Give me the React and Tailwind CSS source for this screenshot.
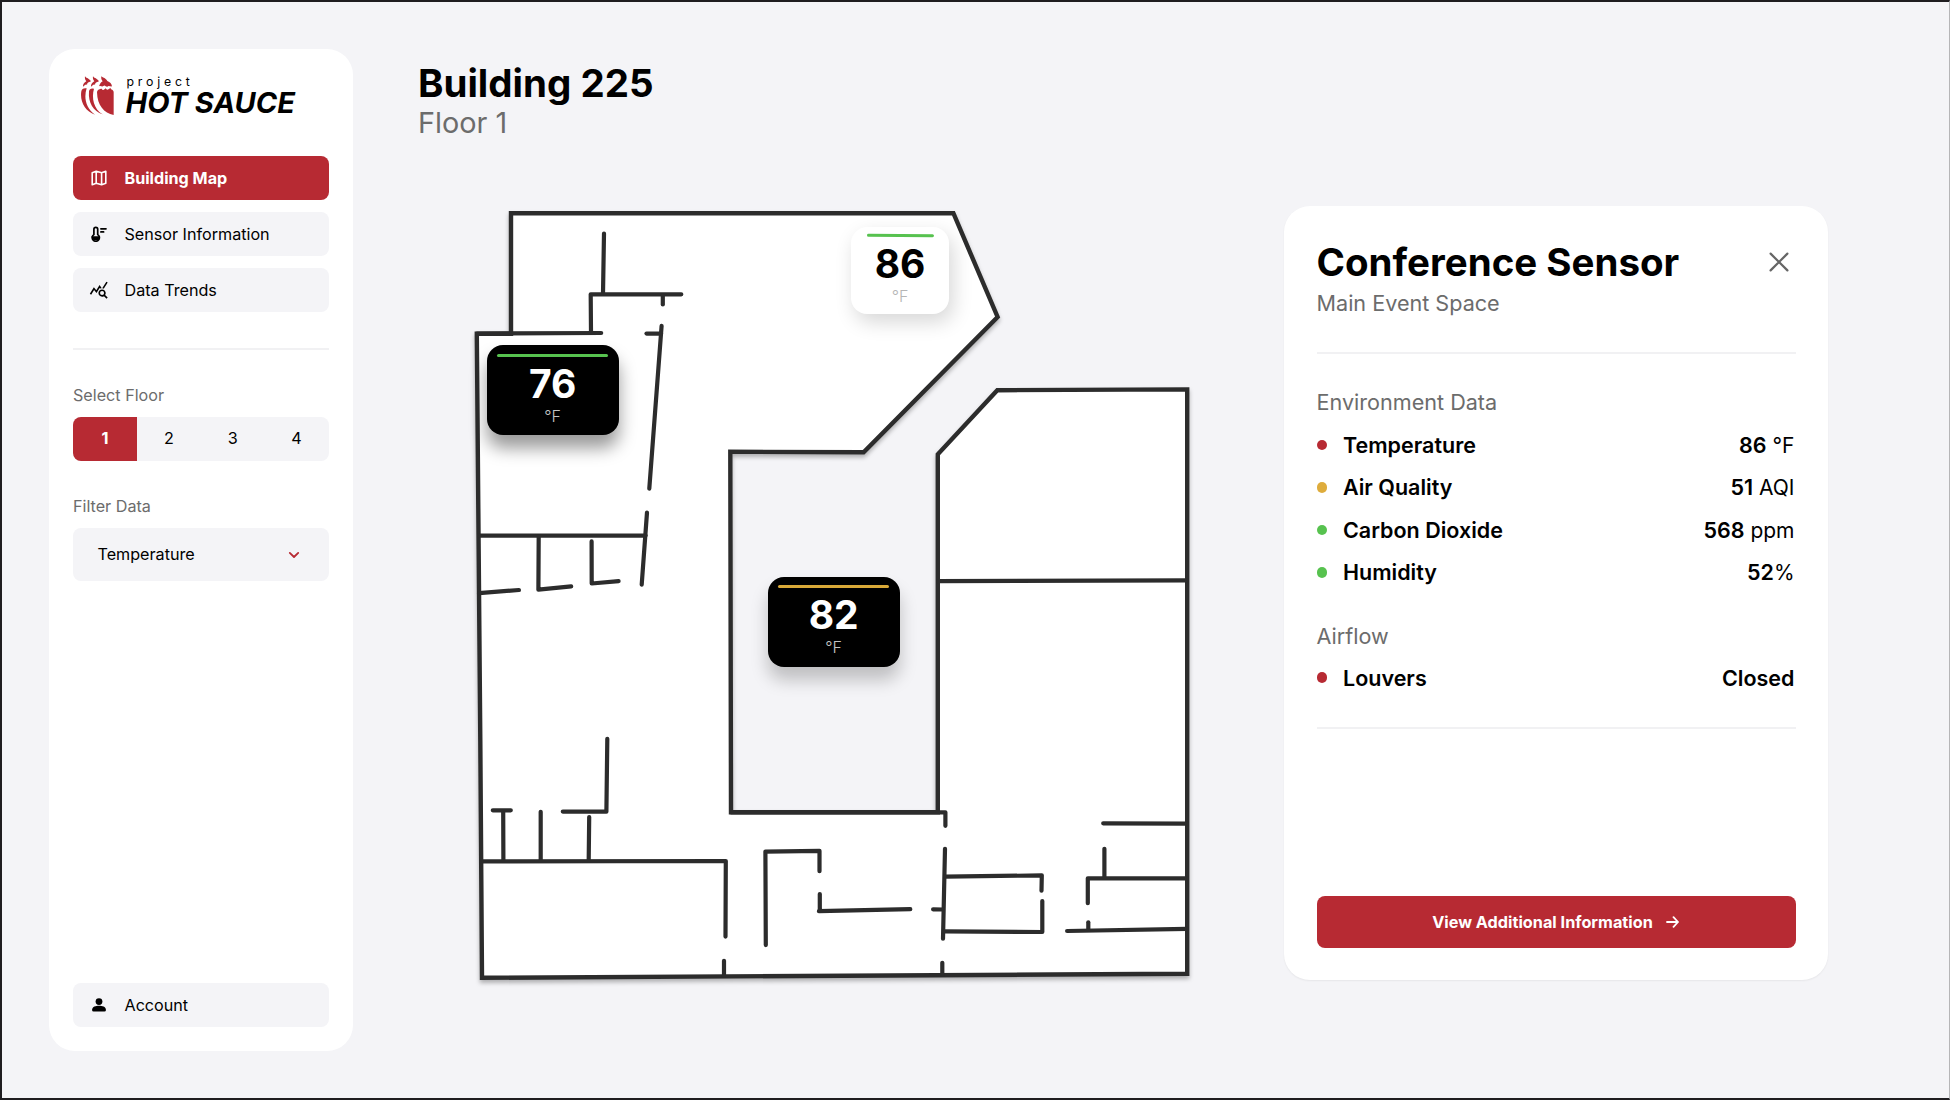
import { MdQueryStats } from "react-icons/md";

const walls = [
  "M604 233.5L603 294",
  "M681.3 294.3H590.7L591 333",
  "M477 333.6L601.2 333",
  "M662.8 295V304.5",
  "M646.5 333.6H661",
  "M661.6 325.8L649.3 488.6",
  "M647 512.5L641.7 584.6",
  "M480 535.6H645.6",
  "M538.7 536L538.4 589.7L571.2 586.4",
  "M591.6 541.4L591.7 583.5L618.6 581.2",
  "M479 593.2L518.9 590",
  "M607.3 738.9L606.4 811.6H562.8",
  "M492.8 810.3H510.8M503.2 811L503.4 860",
  "M540.7 811.8V860",
  "M589.2 817L588.7 860",
  "M481 861.4L725.8 861L725.5 936.6",
  "M724 960.8V976",
  "M765.8 945.1L765.4 851.6L819.5 850.8V871.2",
  "M819.8 894.1V910.8M818.9 911.2L910.3 909.2",
  "M731 812.3H945.4V825.8",
  "M945 848.8L943 938.7",
  "M933.1 909.3L943 909.5",
  "M945 876.7L1041.8 875.4L1041.5 890.7",
  "M1042.3 901.1V932L944 931.4",
  "M942.3 962.8V974",
  "M1103.2 823.3L1187 823.7",
  "M1104.4 848.8V877",
  "M1187 878.3H1087.8V903.2",
  "M1088.3 922.3V930",
  "M1067.1 931L1187 928.8",
  "M938 581.2L1187 580.3",
];

const outline =
  "M511 213.2H953.4L997.6 317L863.6 452.2L730.3 451.8L731 812.3H937.8V454.3L997.3 390.2L1187.2 389.4V973.8L482 977.8L480.3 740L476.8 333.8H511Z";

function FloorPlan() {
  return (
    <svg className="block h-[800px] w-[740px]" viewBox="460 200 740 800" fill="none">
      <g stroke="#2c2c2c" strokeWidth="4.4" strokeLinejoin="round">
        <path className="drop-shadow-[0_3px_2px_rgba(0,0,0,0.28)]" d={outline} fill="#fff" strokeLinejoin="miter" />
        <g strokeWidth="4.2" strokeLinecap="round">
          {walls.map((d) => (
            <path key={d} d={d} />
          ))}
        </g>
      </g>
    </svg>
  );
}

function Logo() {
  return (
    <svg className="h-[41px] w-[35px]" viewBox="240 228 105 123" fill="#b72a33">
      <path d="M291 279C294 270 299 270 305 269C309 277 314 270 317 268C321 276 327 270 331 266C333 274 341 270 341 280V348C312 341 292 321 291 279Z" />
      <path d="M267 277Q269 266 282 269C274 296 281 330 308 346C280 337 264 312 267 277Z" />
      <path d="M244 277Q246 266 260 268C251 296 257 327 285 347C255 337 239 307 244 277Z" />
      <path d="M255 231C257 238 265 235 273 247C265 250 262 251 261 257C256 255 254 259 249 263C248 256 253 250 259 247C255 242 254 238 255 231Z" />
      <path d="M279 231C281 238 289 235 297 247C289 250 286 251 285 257C280 255 278 259 273 263C272 256 277 250 283 247C279 242 278 238 279 231Z" />
      <path d="M304 231C307 237 316 235 322 246C330 249 335 254 336 262C330 263 326 258 322 263C317 264 315 256 310 261C306 265 303 259 297 262C300 254 303 249 308 247C304 242 303 238 304 231Z" />
    </svg>
  );
}

function MapIcon() {
  return (
    <svg className="size-4" viewBox="0 0 16 16" fill="none" stroke="currentColor" strokeWidth="1.6" strokeLinejoin="round">
      <path d="M1.2 2.8L5.2 1.3L10.6 2.8L14.8 1.3V13.2L10.6 14.7L5.2 13.2L1.2 14.7ZM5.2 1.3V13.2M10.6 2.8V14.7" />
    </svg>
  );
}

function ThermometerIcon() {
  return (
    <svg className="size-4" viewBox="0 0 16 16" fill="none" stroke="currentColor" strokeWidth="1.7" strokeLinecap="round">
      <path d="M2.9 8.6V3.2A1.9 1.9 0 0 1 6.7 3.2V8.6A3.6 3.6 0 1 1 2.9 8.6Z" strokeLinejoin="round" />
      <path d="M1.5 11H8.1A3.4 3.4 0 0 1 1.5 11Z" fill="currentColor" />
      <path d="M9.9 2.8H15M9.9 5.9H12.6" />
    </svg>
  );
}

function PersonIcon() {
  return (
    <svg className="size-4" viewBox="0 0 16 16" fill="currentColor">
      <circle cx="8" cy="4.6" r="3.4" />
      <path d="M1.2 12.2C1.2 9.8 4.8 8.7 8 8.7S14.8 9.8 14.8 12.2V13.2Q14.8 14.5 13.5 14.5H2.5Q1.2 14.5 1.2 13.2Z" />
    </svg>
  );
}

function NavItem({ icon, label, active }) {
  return (
    <button
      className={
        active
          ? "flex h-11 w-full items-center rounded-lg bg-[#b72a33] pl-[18px] text-left text-[16.15px] font-bold text-white"
          : "flex h-11 w-full items-center rounded-lg bg-[#f4f4f7] pl-[18px] text-left text-[16.15px] text-black"
      }
    >
      <span className="flex w-[33.5px] items-center">{icon}</span>
      {label}
    </button>
  );
}

function DarkPin({ value, bar, className }) {
  return (
    <div className={`absolute flex h-[90px] w-[132px] flex-col items-center rounded-2xl bg-black pt-[8.5px] ${className}`}>
      <div className={`h-[3px] w-[111px] rounded-full ${bar}`} />
      <div className="mt-[5px] text-[39px] leading-[44px] font-bold text-white">{value}</div>
      <div className="text-base leading-[20px] font-light text-[#c4c4c4]">°F</div>
    </div>
  );
}

function Row({ color, label, value, unit }) {
  return (
    <div className="flex h-[42.6px] items-center text-[21.5px] text-black">
      <span className={`mr-[16px] size-[10.5px] rounded-full ${color}`} />
      <span className="font-semibold">{label}</span>
      <span className="ml-auto">
        <span className="font-semibold">{value}</span>
        {unit && <span className="text-[21px] font-normal">{unit}</span>}
      </span>
    </div>
  );
}

export default function App() {
  return (
    <div className="flex h-[1100px] w-[1950px] overflow-hidden border-t-2 border-r border-b-2 border-l-2 border-t-[#1f1d20] border-r-[#b5b5b7] border-b-[#1f1d20] border-l-[#1f1d20] bg-[#f4f4f7] font-['Inter',sans-serif]">
      <aside className="mt-[47px] ml-[46.5px] flex h-[1002px] w-[304.5px] shrink-0 flex-col rounded-[26px] bg-white px-[24.5px] pb-6">
        <div className="mt-[26px] flex h-[42px] pl-[7px]">
          <Logo />
          <div className="ml-[10.5px] whitespace-nowrap">
            <div className="h-[14px] pl-px text-[12.3px] leading-[13px] tracking-[3.8px] text-black">project</div>
            <div className="text-[29px] leading-[28px] font-bold text-black italic">HOT SAUCE</div>
          </div>
        </div>
        <nav className="mt-[39px] flex flex-col gap-3">
          <NavItem active icon={<MapIcon />} label="Building Map" />
          <NavItem icon={<ThermometerIcon />} label="Sensor Information" />
          <NavItem icon={<MdQueryStats className="-ml-[2px] size-[19.5px] shrink-0" />} label="Data Trends" />
        </nav>
        <div className="mt-[35.5px] h-0.5 w-full bg-[#f1f1f3]" />
        <div className="mt-[33px] text-[16.15px] leading-6 text-[#6c6c6c]">Select Floor</div>
        <div className="mt-[10px] grid h-11 grid-cols-4 overflow-hidden rounded-lg bg-[#f4f4f7] text-[16.15px] text-black">
          <button className="bg-[#b72a33] font-bold text-white">1</button>
          <button>2</button>
          <button>3</button>
          <button>4</button>
        </div>
        <div className="mt-[33.5px] text-[16.15px] leading-6 text-[#6c6c6c]">Filter Data</div>
        <button className="mt-[10px] flex h-[53px] items-center justify-between rounded-lg bg-[#f4f4f7] pr-[29px] pl-[24.5px] text-[16.15px] text-black">
          Temperature
          <svg className="h-[8px] w-[12px]" viewBox="0 0 12 8" fill="none" stroke="#b72a33" strokeWidth="1.8" strokeLinecap="round" strokeLinejoin="round">
            <path d="M1.8 1.9L6 6L10.2 1.9" />
          </svg>
        </button>
        <div className="mt-auto">
          <NavItem icon={<PersonIcon />} label="Account" />
        </div>
      </aside>

      <main className="ml-[65px] w-[782px] shrink-0 pt-[59px]">
        <h1 className="text-[38.5px] leading-[44px] font-bold text-black">Building 225</h1>
        <p className="text-[28.8px] leading-[36px] font-normal text-[#6c6c6c]">Floor 1</p>
        <div className="relative mt-[59px] ml-[42px] w-[740px]">
          <FloorPlan />
          <div className="absolute top-[27px] left-[391px] flex h-[87px] w-[98px] flex-col items-center rounded-2xl bg-white pt-[7px] shadow-[4px_8px_20px_rgba(0,0,0,0.16)]">
            <div className="h-[3px] w-[67px] rotate-[0.6deg] rounded-full bg-[#57c24f]" />
            <div className="mt-[5px] text-[39px] leading-[44px] font-bold text-black">86</div>
            <div className="text-base leading-[20px] font-light text-[#b5b5b5]">°F</div>
          </div>
          <DarkPin value="76" bar="bg-[#57c24f]" className="top-[145px] left-[26.7px] shadow-[0_13px_17px_rgba(0,0,0,0.4)]" />
          <DarkPin value="82" bar="bg-[#d9a938]" className="top-[376.5px] left-[307.7px] shadow-[0_13px_17px_rgba(0,0,0,0.22)]" />
        </div>
      </main>

      <section className="mt-[204px] ml-[84px] flex h-[774px] w-[544px] shrink-0 flex-col rounded-[26px] bg-white pr-[32.5px] pb-8 pl-[32.5px] shadow-[0_1px_2px_rgba(0,0,0,0.06)]">
        <div className="mt-[34px] flex items-start justify-between">
          <h2 className="text-[38.5px] leading-[44px] font-bold whitespace-nowrap text-black">Conference Sensor</h2>
          <svg className="mt-[12px] mr-[6.5px] size-5" viewBox="0 0 20 20" fill="none" stroke="#666" strokeWidth="2.2" strokeLinecap="round">
            <path d="M1.6 1.6L18.4 18.4M18.4 1.6L1.6 18.4" />
          </svg>
        </div>
        <p className="mt-[5px] text-[21.6px] leading-[28px] text-[#6c6c6c]">Main Event Space</p>
        <div className="mt-[34.5px] h-0.5 shrink-0 bg-[#f1f1f3]" />
        <p className="mt-[34.5px] text-[21.6px] leading-[28px] text-[#6c6c6c]">Environment Data</p>
        <div className="mt-[7.5px] pr-px">
          <Row color="bg-[#b72a33]" label="Temperature" value="86" unit=" °F" />
          <Row color="bg-[#deac3c]" label="Air Quality" value="51" unit=" AQI" />
          <Row color="bg-[#57c24f]" label="Carbon Dioxide" value="568" unit=" ppm" />
          <Row color="bg-[#57c24f]" label="Humidity" value="52" unit="%" />
        </div>
        <p className="mt-[28px] text-[21.6px] leading-[28px] text-[#6c6c6c]">Airflow</p>
        <div className="mt-[6.5px] pr-px">
          <Row color="bg-[#b72a33]" label="Louvers" value="Closed" />
        </div>
        <div className="mt-[28px] h-0.5 shrink-0 bg-[#f1f1f3]" />
        <button className="mt-auto flex h-[52px] items-center justify-center rounded-lg bg-[#b72a33] text-[16.25px] font-bold text-white">
          View Additional Information
          <svg className="mr-px ml-[13px] h-[12px] w-[13px]" viewBox="0 0 13 12" fill="none" stroke="currentColor" strokeWidth="1.8" strokeLinecap="round" strokeLinejoin="round">
            <path d="M1 6H12M7.5 1.2L12 6L7.5 10.8" />
          </svg>
        </button>
      </section>
    </div>
  );
}
